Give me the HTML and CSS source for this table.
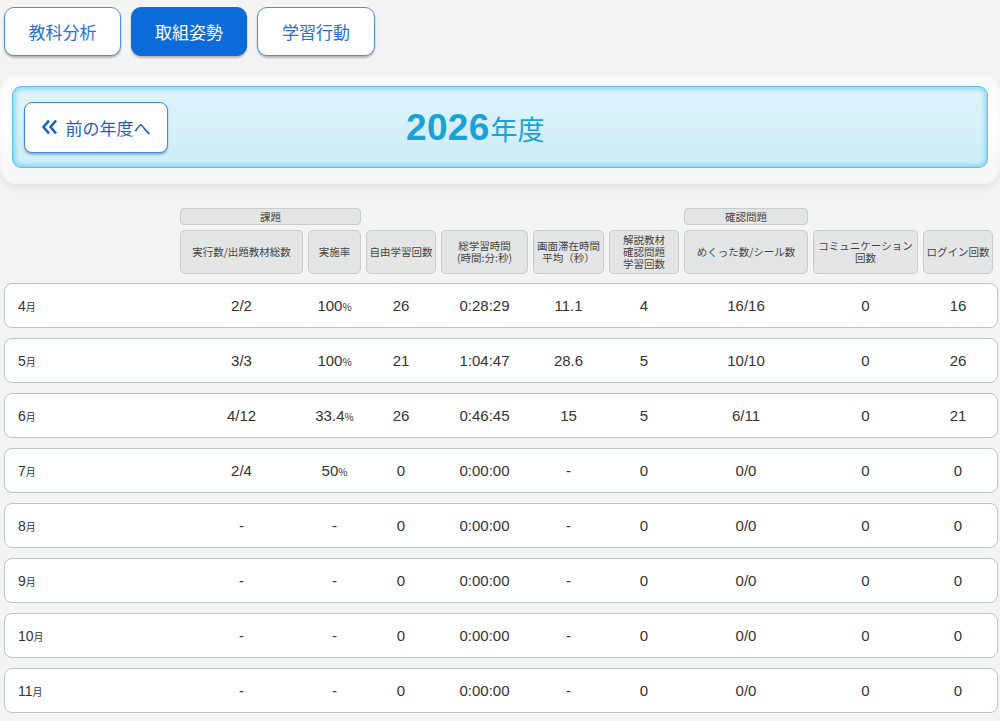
FILE: index.html
```html
<!DOCTYPE html>
<html lang="ja">
<head>
<meta charset="utf-8">
<link rel="stylesheet" href="styles.css">
</head>
<body>
<div class="page">
  <nav class="tabs">
    <button class="tab">教科分析</button>
    <button class="tab active">取組姿勢</button>
    <button class="tab">学習行動</button>
  </nav>

  <section class="year-card">
    <div class="year-panel">
      <button class="prev-btn"><svg class="chev" viewBox="0 0 18 18" width="18" height="18"><path d="M9 2.5 L3.5 9 L9 15.5 M16 2.5 L10.5 9 L16 15.5" fill="none" stroke="#1565c0" stroke-width="2.6" stroke-linejoin="miter"/></svg>前の年度へ</button>
      <h1 class="year-title"><span class="year-num">2026</span>年度</h1>
    </div>
  </section>

  <div class="table">
    <div class="group-row">
      <div class="blank"></div>
      <div class="group g-kadai">課題</div>
      <div class="group g-kakunin">確認問題</div>
    </div>
    <div class="head-row">
      <div class="blank"></div>
      <div class="hcell">実行数/出題教材総数</div>
      <div class="hcell">実施率</div>
      <div class="hcell">自由学習回数</div>
      <div class="hcell">総学習時間<br>(時間:分:秒)</div>
      <div class="hcell">画面滞在時間<br>平均（秒）</div>
      <div class="hcell">解説教材<br>確認問題<br>学習回数</div>
      <div class="hcell">めくった数/シール数</div>
      <div class="hcell">コミュニケーション<br>回数</div>
      <div class="hcell">ログイン回数</div>
    </div>

    <div class="row"><div class="month">4<small>月</small></div><div>2/2</div><div>100<small>%</small></div><div>26</div><div>0:28:29</div><div>11.1</div><div>4</div><div>16/16</div><div>0</div><div>16</div></div>
    <div class="row"><div class="month">5<small>月</small></div><div>3/3</div><div>100<small>%</small></div><div>21</div><div>1:04:47</div><div>28.6</div><div>5</div><div>10/10</div><div>0</div><div>26</div></div>
    <div class="row"><div class="month">6<small>月</small></div><div>4/12</div><div>33.4<small>%</small></div><div>26</div><div>0:46:45</div><div>15</div><div>5</div><div>6/11</div><div>0</div><div>21</div></div>
    <div class="row"><div class="month">7<small>月</small></div><div>2/4</div><div>50<small>%</small></div><div>0</div><div>0:00:00</div><div>-</div><div>0</div><div>0/0</div><div>0</div><div>0</div></div>
    <div class="row"><div class="month">8<small>月</small></div><div>-</div><div>-</div><div>0</div><div>0:00:00</div><div>-</div><div>0</div><div>0/0</div><div>0</div><div>0</div></div>
    <div class="row"><div class="month">9<small>月</small></div><div>-</div><div>-</div><div>0</div><div>0:00:00</div><div>-</div><div>0</div><div>0/0</div><div>0</div><div>0</div></div>
    <div class="row"><div class="month">10<small>月</small></div><div>-</div><div>-</div><div>0</div><div>0:00:00</div><div>-</div><div>0</div><div>0/0</div><div>0</div><div>0</div></div>
    <div class="row"><div class="month">11<small>月</small></div><div>-</div><div>-</div><div>0</div><div>0:00:00</div><div>-</div><div>0</div><div>0/0</div><div>0</div><div>0</div></div>
  </div>
</div>
</body>
</html>
```

FILE: styles.css
```css
* { box-sizing: border-box; }
html, body {
  margin: 0;
  padding: 0;
  background: #f4f4f4;
  font-family: "Liberation Sans", "Noto Sans CJK JP", sans-serif;
  color: #333;
}
.page {
  width: 1000px;
  height: 721px;
  overflow: hidden;
  padding: 7px 2px 0 4px;
}
.tabs {
  display: flex;
  gap: 10px;
}
.tab {
  height: 49px;
  width: 117px;
  border: 1px solid #4a8fe0;
  border-radius: 10px;
  background: #fff;
  color: #2a6fd4;
  font-family: "Noto Sans CJK JP", sans-serif;
  font-size: 17px;
  box-shadow: 0 2px 2px rgba(0,0,0,0.25);
  padding: 0;
}
.tab:nth-child(2) { width: 116px; }
.tab:nth-child(3) { width: 118px; }
.tab.active {
  background: #0b6bd9;
  border-color: #0b6bd9;
  color: #fff;
}
.year-card {
  margin: 18px 0 0 -4px;
  width: 1000px;
  height: 110px;
  border-radius: 16px;
  background: linear-gradient(#fafafa, #ffffff 50%, #f6f6f6);
  box-shadow: 0 4px 7px rgba(0,0,0,0.08), inset 0 0 6px rgba(0,0,0,0.04);
  padding: 12px 10px 0 12px;
}
.year-panel {
  height: 82px;
  width: 976px;
  border-radius: 9px;
  background: linear-gradient(#e0f3fa, #cdeef9);
  border: 1px solid #5bc3e6;
  box-shadow: inset 0 0 5px 2px #84d3ee;
  display: flex;
  align-items: center;
  padding-left: 11px;
}
.prev-btn {
  width: 144px;
  height: 51px;
  border: 1px solid #3c86e0;
  border-radius: 8px;
  background: #fff;
  color: #1f5fc4;
  font-family: "Noto Sans CJK JP", sans-serif;
  font-size: 17px;
  display: flex;
  align-items: center;
  justify-content: center;
  gap: 8px;
  padding: 0 2px 0 0;
  box-shadow: 0 2px 2px rgba(0,0,0,0.25);
}
.chev { display: block; }
.year-title {
  margin: 0 0 0 238px;
  font-family: "Noto Sans CJK JP", sans-serif;
  font-weight: 400;
  font-size: 27px;
  color: #1aa2d6;
  line-height: 1;
  display: flex;
  align-items: baseline;
}
.year-num {
  font-family: "Liberation Sans", sans-serif;
  font-weight: 700;
  font-size: 37px;
  letter-spacing: 0.3px;
  margin-right: 1px;
}
.table {
  margin-top: 24px;
  width: 994px;
  font-size: 15px;
}
.group-row, .head-row, .row {
  display: grid;
  grid-template-columns: 171px 123px 53px 70px 87px 71px 70px 124px 105px 70px;
  column-gap: 5px;
}
.group-row { height: 17px; }
.group {
  background: #e4e6e6;
  border: 1px solid #c8cccc;
  border-radius: 4px;
  font-family: "Noto Sans CJK JP", sans-serif;
  font-size: 10.5px;
  color: #444;
  display: flex;
  align-items: center;
  justify-content: center;
}
.g-kadai { grid-column: 2 / 4; }
.g-kakunin { grid-column: 8 / 9; }
.head-row {
  margin-top: 5px;
  height: 44px;
}
.hcell {
  background: #e4e6e6;
  border: 1px solid #c8cccc;
  border-radius: 5px;
  font-family: "Noto Sans CJK JP", sans-serif;
  font-size: 10.5px;
  line-height: 12px;
  color: #444;
  display: flex;
  align-items: center;
  justify-content: center;
  text-align: center;
  white-space: nowrap;
}
.row {
  margin-top: 10px;
  height: 45px;
  background: #fff;
  border: 1px solid #bcc5c5;
  border-radius: 8px;
  align-items: center;
  color: #333;
}
.head-row + .row { margin-top: 9px; }
.row > div {
  text-align: center;
}
.row > div:not(.month) { transform: translateX(-1px); }
.row .month {
  text-align: left;
  padding-left: 13px;
  font-size: 14px;
}
.row small {
  font-size: 10px;
  font-family: "Noto Sans CJK JP", sans-serif;
}
.row .month small { font-size: 10px; }
```
